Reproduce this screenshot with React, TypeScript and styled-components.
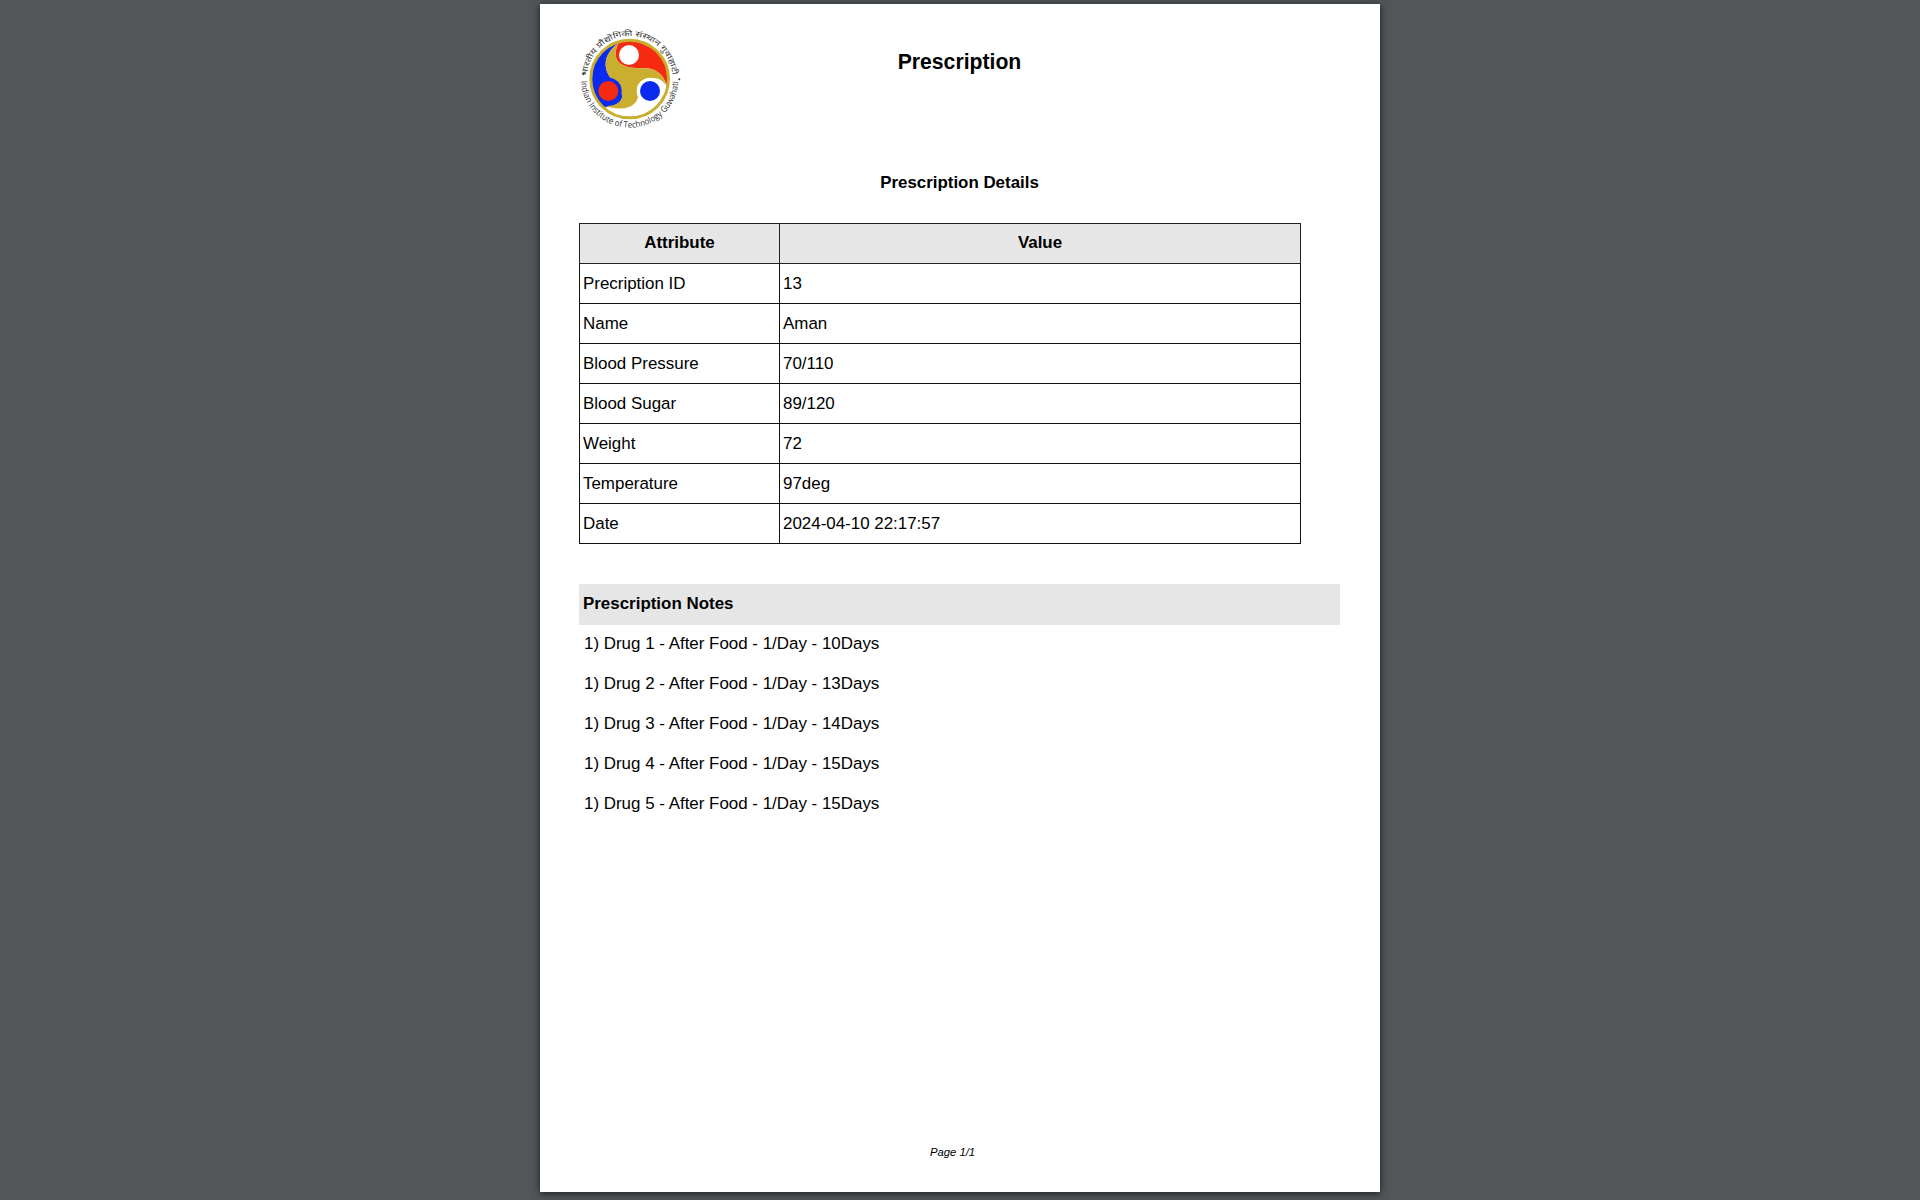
import React, { ReactElement } from 'react';
import styled, { createGlobalStyle } from 'styled-components';

const GlobalStyle = createGlobalStyle`
  html, body {
    margin: 0;
    padding: 0;
    height: 100%;
    overflow: hidden;
    background: #525659;
  }
`;

const Viewer = styled.div`
  height: 100vh;
  box-sizing: border-box;
  padding-top: 4px;
  display: flex;
  justify-content: center;
  background: #525659;
  font-family: "Liberation Sans", Arial, sans-serif;
  color: #000;
`;

const Sheet = styled.main`
  width: 840px;
  height: 1188px;
  box-sizing: border-box;
  padding: 23px 40px 32px 39px;
  display: flex;
  flex-direction: column;
  background: #fff;
  box-shadow: 0 2px 6px rgba(0, 0, 0, 0.45), 0 0 10px rgba(0, 0, 0, 0.3);
`;

const Header = styled.header`
  display: grid;
  grid-template-columns: 1fr auto 1fr;
  height: 102px;
`;

const LogoMark = styled.svg`
  display: block;
  overflow: visible;
`;

const Title = styled.h1`
  margin: 22px 0 0;
  font-size: 21.2px;
  line-height: 26px;
  font-weight: 700;
`;

const SectionTitle = styled.h2`
  margin: 42px 0 28px;
  font-size: 16.9px;
  line-height: 24px;
  font-weight: 700;
  text-align: center;
`;

const Table = styled.table`
  width: 721px;
  table-layout: fixed;
  border-collapse: collapse;
  font-size: 16.93px;
  border: 1px solid #333;
`;

const HeadCell = styled.th<{ $width: number }>`
  width: ${(p) => p.$width}px;
  height: 40px;
  box-sizing: border-box;
  padding: 0 4px 2px;
  border: 1px solid #222;
  background: #e6e6e6;
  font-size: 16.93px;
  font-weight: 700;
  text-align: center;
`;

const Cell = styled.td`
  height: 40px;
  box-sizing: border-box;
  padding: 0 3px;
  border: 1px solid #111;
`;

const NotesBar = styled.h3`
  margin: 40px 0 0;
  height: 41px;
  box-sizing: border-box;
  padding: 0 0 2px 4px;
  display: flex;
  align-items: center;
  background: #e6e6e6;
  font-size: 16.93px;
  font-weight: 700;
`;

const Notes = styled.ol`
  list-style: none;
  margin: 0;
  padding: 1px 0 0 5px;
  display: flex;
  flex-direction: column;
  gap: 4px;
`;

const Note = styled.li`
  font-size: 16.93px;
  line-height: 36px;
`;

const Footer = styled.footer`
  margin-top: auto;
  padding-right: 14px;
  font-size: 11.3px;
  line-height: 16px;
  font-style: italic;
  text-align: center;
`;

const rows: [string, string][] = [
  ['Precription ID', '13'],
  ['Name', 'Aman'],
  ['Blood Pressure', '70/110'],
  ['Blood Sugar', '89/120'],
  ['Weight', '72'],
  ['Temperature', '97deg'],
  ['Date', '2024-04-10 22:17:57'],
];

const notes = [
  '1) Drug 1 - After Food - 1/Day - 10Days',
  '1) Drug 2 - After Food - 1/Day - 13Days',
  '1) Drug 3 - After Food - 1/Day - 14Days',
  '1) Drug 4 - After Food - 1/Day - 15Days',
  '1) Drug 5 - After Food - 1/Day - 15Days',
];

function Logo(): ReactElement {
  return (
    <LogoMark width="102" height="102" viewBox="57 81 306 306">
      <defs>
        <path id="logo-top" d="M 80 237 A 129 129 0 0 1 338 237" />
        <path id="logo-bottom" d="M 63 237 A 146 146 0 0 0 355 237" />
      </defs>
      <path d="M172 128 A116 116 0 0 0 130 322 C165 320 190 305 186 285 C180 255 135 235 137 190 C138 165 155 145 172 133 Z" fill="#0a2bef" />
      <path d="M178 124 A116 116 0 0 1 322 262 C312 225 290 205 255 205 C225 205 170 205 167 165 C167 148 170 138 178 124 Z" fill="#f52a10" />
      <path d="M172 133 C155 145 138 165 137 190 C135 235 180 255 186 285 C190 305 165 320 135 318 C160 325 205 335 228 305 C245 280 228 250 270 235 C290 230 310 240 318 258 C312 225 290 205 255 205 C225 205 170 205 167 165 C167 150 170 140 172 133 Z" fill="#c9ae2f" />
      <circle cx="145" cy="273" r="40" fill="#0a2bef" />
      <circle cx="145" cy="273" r="30" fill="#f52a10" />
      <circle cx="270" cy="273" r="40" fill="#fff" />
      <circle cx="270" cy="273" r="30" fill="#0a2bef" />
      <circle cx="207" cy="165" r="30" fill="#fff" />
      <circle cx="209" cy="237" r="116.5" fill="none" stroke="#c9ae2f" strokeWidth="9" />
      <text fontFamily="'Noto Sans', 'DejaVu Sans', sans-serif" fontSize="23" fill="#333">
        <textPath href="#logo-top" textLength="385" lengthAdjust="spacingAndGlyphs" startOffset="8">भारतीय प्रौद्योगिकी संस्थान गुवाहाटी</textPath>
      </text>
      <text fontFamily="'Open Sans', sans-serif" fontSize="26" fill="#333">
        <textPath href="#logo-bottom" textLength="445" lengthAdjust="spacingAndGlyphs" startOffset="6">Indian Institute of Technology Guwahati</textPath>
      </text>
      <circle cx="71" cy="222" r="3" fill="#333" />
      <circle cx="358" cy="238" r="3" fill="#333" />
    </LogoMark>
  );
}

export default function App(): ReactElement {
  return (
    <Viewer>
      <GlobalStyle />
      <Sheet>
        <Header>
          <Logo />
          <Title>Prescription</Title>
        </Header>
        <SectionTitle>Prescription Details</SectionTitle>
        <Table>
          <thead>
            <tr>
              <HeadCell $width={200}>Attribute</HeadCell>
              <HeadCell $width={521}>Value</HeadCell>
            </tr>
          </thead>
          <tbody>
            {rows.map(([key, value]) => (
              <tr key={key}>
                <Cell>{key}</Cell>
                <Cell>{value}</Cell>
              </tr>
            ))}
          </tbody>
        </Table>
        <NotesBar>Prescription Notes</NotesBar>
        <Notes>
          {notes.map((note) => (
            <Note key={note}>{note}</Note>
          ))}
        </Notes>
        <Footer>Page 1/1</Footer>
      </Sheet>
    </Viewer>
  );
}
